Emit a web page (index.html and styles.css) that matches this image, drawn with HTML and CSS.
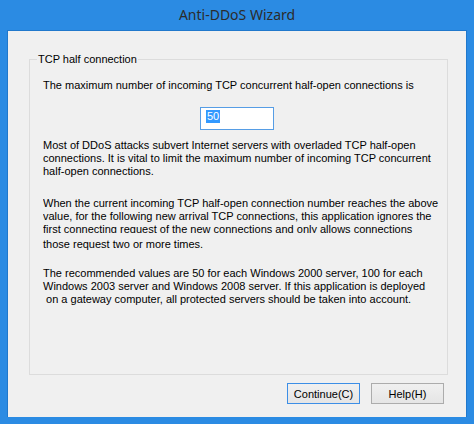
FILE: index.html
```html
<!DOCTYPE html>
<html>
  <head>
    <title>Anti-DDoS Wizard</title>
    <link rel="stylesheet" href="styles.css">
  </head>
  <body>
    <div class="window">
      <div class="titlebar">Anti-DDoS Wizard</div>
      <div class="client">
        <fieldset class="group">
          <legend>TCP half connection</legend>
          <p class="line">The maximum number of incoming TCP concurrent half-open connections is</p>
          <div class="field"><span class="sel">50</span></div>
          <p class="para">
            Most of DDoS attacks subvert Internet servers with overladed TCP half-open<br>
            connections. It is vital to limit the maximum number of incoming TCP concurrent<br>
            half-open connections.
          </p>
          <p class="para clipped">
            When the current incoming TCP half-open connection number reaches the above<br>
            value, for the following new arrival TCP connections, this application ignores the<br>
            first connecting request of the new connections and only allows connections
          </p>
          <p class="line after">those request two or more times.</p>
          <p class="para last">
            The recommended values are 50 for each Windows 2000 server, 100 for each<br>
            Windows 2003 server and Windows 2008 server. If this application is deployed<br>
            &nbsp;on a gateway computer, all protected servers should be taken into account.
          </p>
        </fieldset>
        <div class="buttons">
          <button class="btn default">Continue(C)</button>
          <button class="btn">Help(H)</button>
        </div>
      </div>
    </div>
  </body>
</html>
```

FILE: styles.css
```css
html, body {
  margin: 0;
  padding: 0;
}
body {
  width: 474px;
  height: 424px;
  overflow: hidden;
  font-family: "Liberation Sans", Arial, sans-serif;
  font-size: 11px;
}
.window {
  width: 474px;
  height: 424px;
  box-sizing: border-box;
  background-color: #2b8be3;
  padding: 0 7px 7px 7px;
  display: flex;
  flex-direction: column;
}
.titlebar {
  height: 30px;
  line-height: 30px;
  text-align: center;
  font-family: "Noto Sans", sans-serif;
  font-size: 14px;
  color: #2b2b2b;
}
.client {
  flex: 1;
  background-color: #f0f0f0;
  border: 1px solid #2078cc;
  border-bottom: none;
  display: flex;
  flex-direction: column;
  padding: 22px 0 0 21px;
}
.group {
  margin: 0;
  padding: 0 0 0 13px;
  width: 419px;
  height: 322px;
  box-sizing: border-box;
  border: 1px solid #dcdcdc;
}
.group legend {
  padding: 0 1px;
  margin-left: -6px;
  line-height: 13px;
  color: #000;
}
.line, .para {
  margin: 0;
  line-height: 13px;
  white-space: nowrap;
  color: #000;
}
.line {
  margin-top: 13px;
}
.field {
  width: 74px;
  height: 23px;
  box-sizing: border-box;
  border: 1px solid #569de5;
  background-color: #fff;
  margin: 15px 0 0 157px;
  padding: 2px 0 0 5px;
}
.sel {
  display: inline-block;
  background-color: #3399ff;
  color: #fff;
  line-height: 13px;
  padding: 0 1px;
}
.para {
  margin-top: 9px;
}
.clipped {
  margin-top: 19px;
  height: 36px;
  overflow: hidden;
}
.after {
  margin-top: 5px;
}
.last {
  margin-top: 16px;
}
.buttons {
  display: flex;
  justify-content: flex-end;
  gap: 11px;
  margin: 8px 22px 0 0;
}
.btn {
  width: 73px;
  height: 21px;
  font-family: "Liberation Sans", Arial, sans-serif;
  font-size: 11px;
  color: #000;
  background: linear-gradient(#f0f0f0, #e5e5e5);
  border: 1px solid #acacac;
  padding: 0;
}
.btn.default {
  border-color: #3c8ee6;
}
```
